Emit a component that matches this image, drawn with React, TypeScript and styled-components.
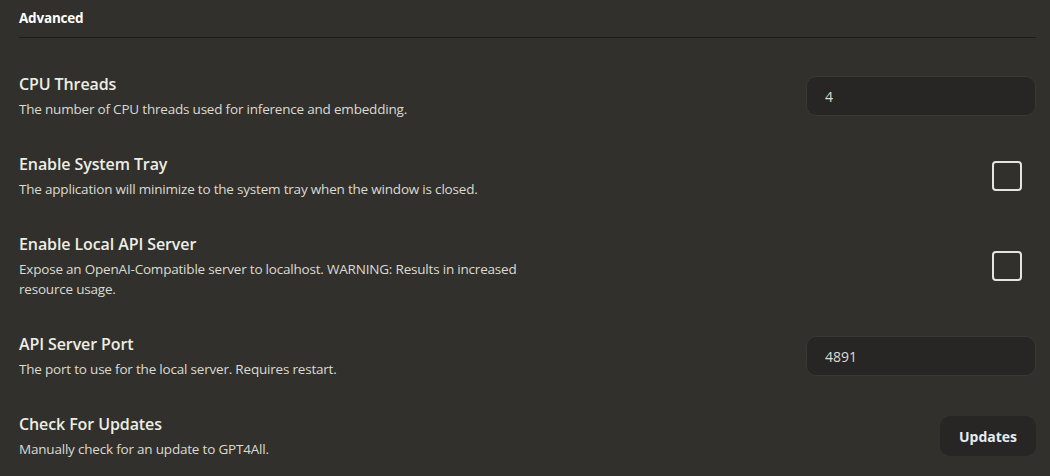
import styled, { createGlobalStyle } from "styled-components"

const GlobalStyle = createGlobalStyle`
    html, body {
        margin: 0;
        padding: 0;
        background: #32302d;
    }
    body {
        font-family: "Open Sans", "Noto Sans", sans-serif;
        color: #eceee4;
    }
`

const Page = styled.main`
    padding: 8px 14px 20px 19px;
    min-height: 476px;
    box-sizing: border-box;
`
const SectionTitle = styled.h2`
    margin: 0;
    font-size: 13.5px;
    line-height: 20px;
    font-weight: 700;
    letter-spacing: -0.2px;
    color: #ffffff;
`
const Divider = styled.hr`
    margin: 9px 0 35px 0;
    border: none;
    height: 1px;
    background: #1f1d1b;
    width: 1017px;
`
const SettingList = styled.div`
    display: flex;
    flex-direction: column;
    gap: 34px;
`
const SettingRow = styled.div`
    display: flex;
    align-items: center;
    justify-content: space-between;
`
const TextBlock = styled.div`
    display: flex;
    flex-direction: column;
    gap: 4px;
    max-width: 520px;
`
const Label = styled.h3`
    margin: 0;
    font-size: 16px;
    line-height: 22px;
    font-weight: 600;
    letter-spacing: -0.1px;
    color: #eceee4;
`
const Description = styled.p`
    margin: 0;
    font-size: 13.5px;
    line-height: 20px;
    letter-spacing: -0.2px;
    color: #dadbd1;
`
const TextInput = styled.input`
    width: 230px;
    height: 40px;
    box-sizing: border-box;
    padding: 0 18px;
    background: #282624;
    border: 1px solid #3a3734;
    border-radius: 10px;
    color: #dcdcd4;
    font-family: inherit;
    font-size: 14px;
    outline: none;
`
const CheckBox = styled.span`
    display: block;
    width: 30px;
    height: 30px;
    box-sizing: border-box;
    border: 2px solid #e4e4e0;
    border-radius: 4px;
    margin-right: 14px;
`
const ActionButton = styled.button`
    width: 96px;
    height: 40px;
    background: #282624;
    border: none;
    border-radius: 10px;
    color: #e4ecf4;
    font-family: inherit;
    font-size: 14px;
    font-weight: 700;
    cursor: pointer;
`

type Control =
    | { kind: "input"; value: string }
    | { kind: "check" }
    | { kind: "button"; text: string }

type Setting = {
    label: string
    description: string
    control: Control
}

const settings: Setting[] = [
    {
        label: "CPU Threads",
        description: "The number of CPU threads used for inference and embedding.",
        control: { kind: "input", value: "4" },
    },
    {
        label: "Enable System Tray",
        description: "The application will minimize to the system tray when the window is closed.",
        control: { kind: "check" },
    },
    {
        label: "Enable Local API Server",
        description: "Expose an OpenAI-Compatible server to localhost. WARNING: Results in increased resource usage.",
        control: { kind: "check" },
    },
    {
        label: "API Server Port",
        description: "The port to use for the local server. Requires restart.",
        control: { kind: "input", value: "4891" },
    },
    {
        label: "Check For Updates",
        description: "Manually check for an update to GPT4All.",
        control: { kind: "button", text: "Updates" },
    },
]

const renderControl = (control: Control) => {
    if (control.kind === "input") return <TextInput defaultValue={control.value} />
    if (control.kind === "check") return <CheckBox role="checkbox" aria-checked="false" />
    return <ActionButton>{control.text}</ActionButton>
}

export default function App() {
    return (
        <>
            <GlobalStyle />
            <Page>
                <SectionTitle>Advanced</SectionTitle>
                <Divider />
                <SettingList>
                    {settings.map((s) => (
                        <SettingRow key={s.label}>
                            <TextBlock>
                                <Label>{s.label}</Label>
                                <Description>{s.description}</Description>
                            </TextBlock>
                            {renderControl(s.control)}
                        </SettingRow>
                    ))}
                </SettingList>
            </Page>
        </>
    )
}
